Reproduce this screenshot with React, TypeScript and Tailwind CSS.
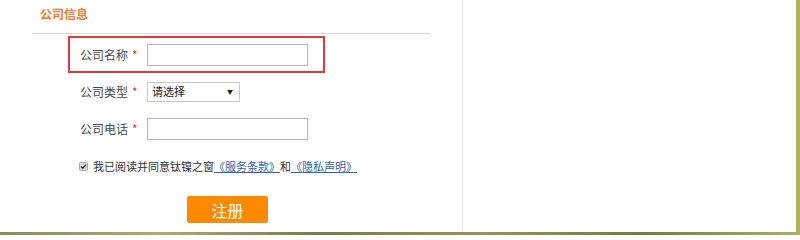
import React from "react";

const font = { fontFamily: '"Noto Sans CJK SC", "Noto Sans", sans-serif' };

function Star() {
  return <span className="text-[#e4393c] ml-[4px]">*</span>;
}

export default function App() {
  return (
    <div
      className="w-[800px] h-[235px] overflow-hidden bg-[linear-gradient(90deg,#8a8a5a,#b5a86a,#7a7a4a,#a09050,#6f7f3f,#b0b060)]"
      style={font}
    >
      <div className="w-[796px] h-[232px] bg-white flex">
        <div className="w-[463px] h-full border-r border-[#e6e6e6] flex flex-col">
          <div className="ml-[32px] w-[398px] h-[34px] border-b border-[#d8d8d8] pl-[8px] pt-[8px]">
            <span className="text-[12px] font-bold text-[#f07a30] leading-[12px] block">公司信息</span>
          </div>
          <div className="ml-[68px] mt-[2px] w-[257px] h-[37px] border-2 border-[#e4393c] flex items-center pl-[10px]">
            <span className="w-[67px] text-[12px] text-[#4a4a4a] leading-none">公司名称<Star /></span>
            <div className="w-[161px] h-[22px] border border-[#a9b7c6] bg-white" />
          </div>
          <div className="ml-[68px] h-[37px] flex items-center pl-[12px]">
            <span className="w-[67px] text-[12px] text-[#4a4a4a] leading-none">公司类型<Star /></span>
            <div className="w-[93px] h-[20px] border border-[#c8c8c8] bg-white flex items-center justify-between pl-[4px] pr-[6px]">
              <span className="text-[11px] text-[#222] leading-none">请选择</span>
              <span className="text-[6px] text-[#222] leading-none">▼</span>
            </div>
          </div>
          <div className="ml-[68px] h-[37px] flex items-center pl-[12px]">
            <span className="w-[67px] text-[12px] text-[#4a4a4a] leading-none">公司电话<Star /></span>
            <div className="w-[161px] h-[22px] border border-[#a9b7c6] bg-white" />
          </div>
          <div className="ml-[79px] mt-[8px] h-[22px] flex items-center text-[11px] text-[#333] leading-none">
            <svg width="9" height="9" viewBox="0 0 9 9" className="mr-[5px]">
              <rect x="0.5" y="0.5" width="8" height="8" rx="1" fill="#dcdcdc" stroke="#a8a8a8" />
              <path d="M2 4.6 L3.8 6.3 L7 2.6" stroke="#333" strokeWidth="1.4" fill="none" />
            </svg>
            <span>我已阅读并同意钛镍之窗</span>
            <a className="text-[#2f63a8] underline">《服务条款》</a>
            <span>和</span>
            <a className="text-[#2f63a8] underline">《隐私声明》</a>
          </div>
          <div className="ml-[187px] mt-[19px] w-[81px] h-[27px] bg-[#ff8a00] rounded-[2px] flex items-center justify-center">
            <span className="text-white text-[16px] leading-none">注册</span>
          </div>
        </div>
        <div className="flex-1" />
      </div>
    </div>
  );
}
